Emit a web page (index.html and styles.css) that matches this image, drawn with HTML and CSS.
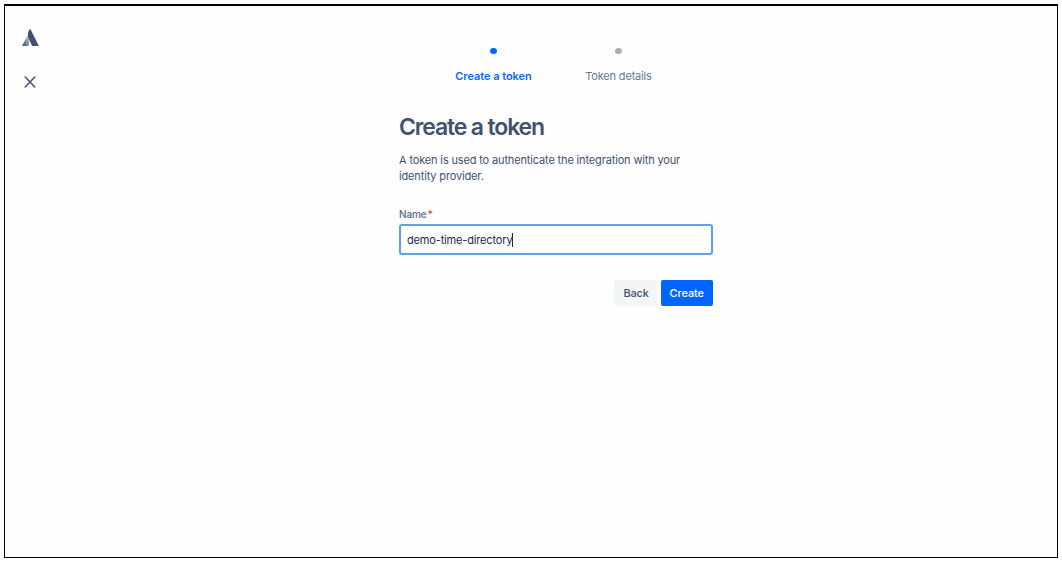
FILE: index.html
```html
<!DOCTYPE html>
<html lang="en">
<head>
<meta charset="utf-8">
<title>Create a token</title>
<link rel="stylesheet" href="styles.css">
</head>
<body>
<div class="frame">
  <nav class="rail">
    <svg class="logo" viewBox="0 0 17 18" width="17" height="18">
      <defs>
        <linearGradient id="fade" x1="1" y1="0.1" x2="0.1" y2="0.9">
          <stop offset="0" stop-color="#c3c9d4"/>
          <stop offset="0.3" stop-color="#a3acbc"/>
          <stop offset="1" stop-color="#42526e"/>
        </linearGradient>
      </defs>
      <path d="M5 7.3Q5.6 6.8 6.2 7.6Q8.3 12.5 6.5 17.1H.6Q0 17 .3 16.4Z" fill="url(#fade)"/>
      <path d="M7.4.4Q8-.1 8.6.6L16.6 16.4Q16.8 17 16.2 17.1H10.2L6.6 9.5Q4.8 4.8 7.4.4Z" fill="#42526e"/>
    </svg>
    <svg class="close" viewBox="0 0 12 12" width="12" height="12">
      <path d="M1.2 1L10.8 11M10.8 1L1.2 11" stroke="#42526e" stroke-width="1.5" stroke-linecap="round"/>
    </svg>
  </nav>
  <main class="content">
    <ol class="steps">
      <li class="step step-active"><i class="dot"></i><span class="step-label">Create a token</span></li>
      <li class="step"><i class="dot"></i><span class="step-label step-next">Token details</span></li>
    </ol>
    <h1 class="title">Create a token</h1>
    <p class="intro">A token is used to authenticate the integration with your<br>identity provider.</p>
    <div class="label">Name<span class="required">*</span></div>
    <div class="field"><span class="value">demo-time-directory</span><i class="caret"></i></div>
    <div class="actions">
      <button class="button back">Back</button>
      <button class="button create">Create</button>
    </div>
  </main>
</div>
</body>
</html>
```

FILE: styles.css
```css
* { box-sizing: border-box; }
body {
  margin: 0;
  padding: 4px;
  height: 562px;
  background: #fff;
  font-family: Inter, "Liberation Sans", sans-serif;
  color: #42526e;
}
.frame {
  display: flex;
  width: 1054px;
  height: 554px;
  border: 1px solid #000;
  border-top-width: 2px;
  background: #fefefe;
}
.rail {
  display: flex;
  flex-direction: column;
  align-items: center;
  gap: 29px;
  width: 50px;
  padding-top: 23px;
}
.content { width: 314px; margin-left: 344px; padding-top: 42px; }
.steps {
  display: flex;
  margin: 0;
  padding: 0 0 0 32px;
  list-style: none;
  font-size: 11px;
}
.step {
  display: flex;
  flex-direction: column;
  align-items: center;
  width: 125px;
  color: #6b778c;
}
.step-active { color: #0c66f5; font-weight: 600; }
.dot { width: 7px; height: 6px; border-radius: 50%; background: #a5adba; }
.step-active .dot { background: #0065ff; }
.step-label {
  margin-top: 14px;
  line-height: 16px;
  white-space: nowrap;
  letter-spacing: -0.04px;
}
.step-next { letter-spacing: -0.17px; }
.title {
  margin: 28px 0 0;
  font-size: 23px;
  line-height: 30px;
  font-weight: 600;
  letter-spacing: -1.15px;
}
.intro {
  margin: 10px 0 0;
  font-size: 11px;
  line-height: 16px;
  letter-spacing: -0.15px;
  white-space: nowrap;
}
.label {
  display: flex;
  gap: 1px;
  margin-top: 23px;
  font-size: 10px;
  line-height: 14px;
  font-weight: 600;
  letter-spacing: -0.2px;
  color: #6b778c;
}
.required { color: #f04a2a; }
.field {
  display: flex;
  align-items: center;
  height: 31px;
  margin-top: 3px;
  padding-left: 6px;
  border: 2px solid #5c9ff5;
  border-radius: 3px;
  background: #fff;
  font-size: 11px;
  letter-spacing: -0.16px;
  color: #172b4d;
}
.caret { width: 1px; height: 14px; background: #172b4d; }
.actions { display: flex; justify-content: flex-end; gap: 4px; margin-top: 25px; }
.button {
  height: 26px;
  padding: 0;
  border: 0;
  border-radius: 2px;
  font: 500 11px Inter, "Liberation Sans", sans-serif;
}
.back { width: 43px; padding-left: 2px; background: #f4f5f7; color: #42526e; letter-spacing: -0.2px; }
.create { width: 52.5px; background: #0065ff; color: #fff; letter-spacing: -0.1px; }
```
